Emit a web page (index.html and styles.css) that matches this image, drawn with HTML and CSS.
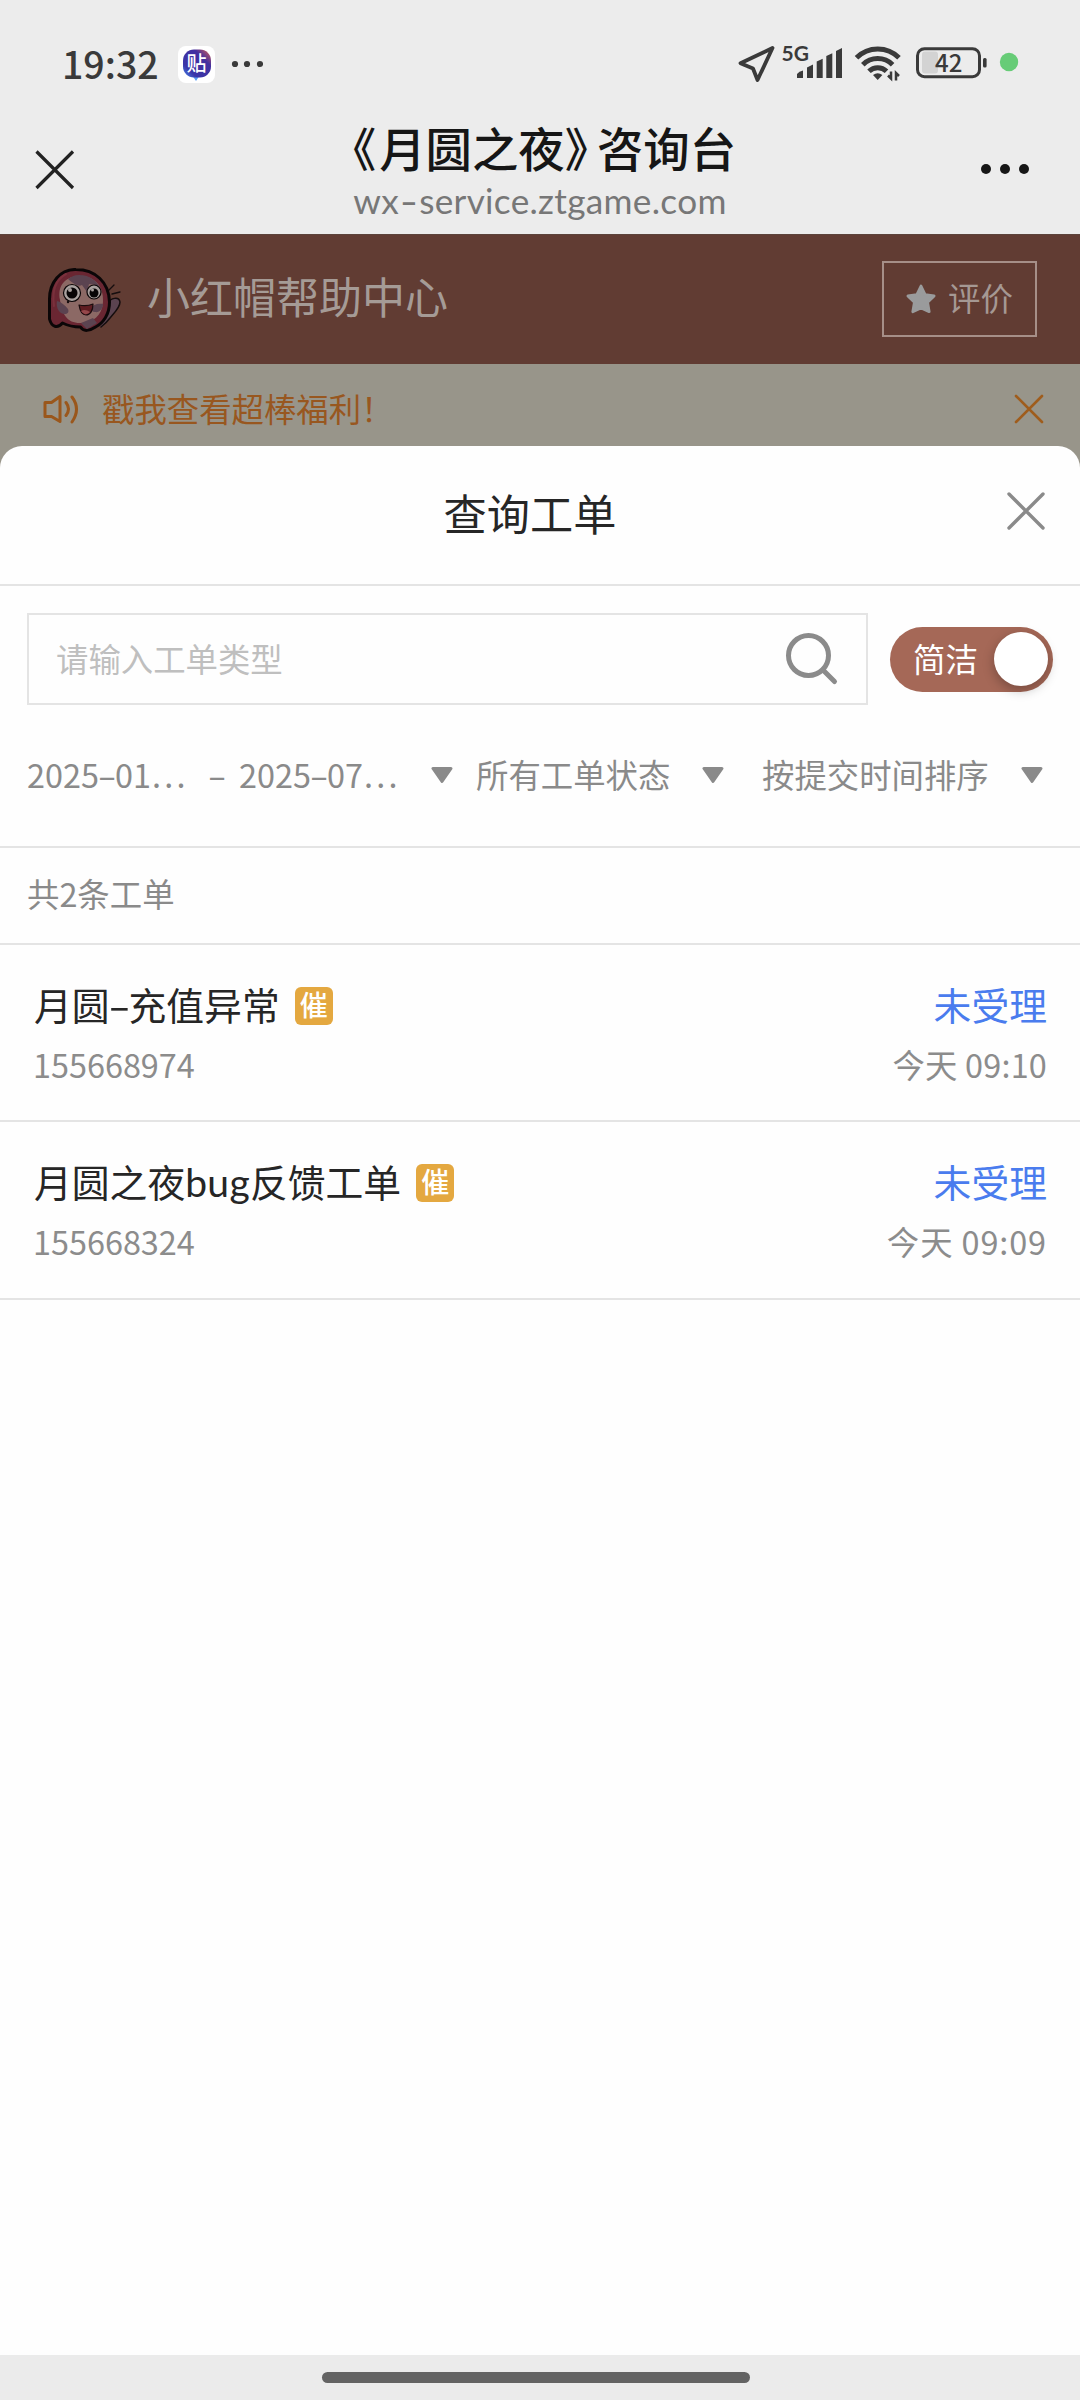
FILE: index.html
```html
<!DOCTYPE html>
<html lang="zh-CN">
<head>
<meta charset="utf-8">
<title>《月圆之夜》咨询台</title>
<link rel="stylesheet" href="styles.css">
</head>
<body>
<div class="status">
  <span class="clock">19:32</span>
  <span class="app"><svg width="37" height="37" viewBox="0 0 37 37"><defs><linearGradient id="g" x1="0" y1="1" x2="1" y2="0"><stop offset="0" stop-color="#4a8df0"/><stop offset=".25" stop-color="#3a35a8"/><stop offset=".7" stop-color="#4330a0"/><stop offset="1" stop-color="#e0604e"/></linearGradient></defs><rect width="37" height="37" rx="8" fill="#fff"/><path d="M14 29h8l-4 6z" fill="#5a9df2"/><rect x="5" y="3.500" width="28" height="28" rx="11" fill="url(#g)"/><text x="18.500" y="25" text-anchor="middle" class="app-char">贴</text></svg></span>
  <svg class="more-small" width="32" height="8" viewBox="0 0 32 8" fill="#3a3a3a"><circle cx="4" cy="4" r="3.100"/><circle cx="16" cy="4" r="3.100"/><circle cx="29" cy="4" r="3.100"/></svg>
  <svg class="signals" width="290" height="46" viewBox="734 42 290 46">
    <path d="M772.500 49 740.500 64.300 753 69.500 757.500 81z" fill="none" stroke="#3a3a3a" stroke-width="3.800" stroke-linejoin="round"/>
    <text x="781.500" y="61.500" class="net">5G</text>
    <g fill="#3a3a3a"><path d="M797 79v-4q2-3 6-3.500v7.500z"/><path d="M807 79V68.500l6-3V79z"/><path d="M816.700 79V62.500l6-2.800V79z"/><path d="M826.300 79V57l6-2.800V79z"/><path d="M836 79V52l6-3V79z"/></g>
    <g fill="none" stroke="#3a3a3a" stroke-width="5"><path d="M856.500 58.800a30 30 0 0 1 42.500 0"/><path d="M862.800 65.800a21 21 0 0 1 29.800 0"/><path d="M869 72.300a12.500 12.500 0 0 1 17.500 0"/></g>
    <path d="M873 76q4.700-3.600 9.400 0l-4.700 5z" fill="#3a3a3a"/>
    <path d="M888 76.500l3 3V72.500M899 77l-3-3V81.500" fill="none" stroke="#3a3a3a" stroke-width="2.500"/>
    <rect x="922" y="52.500" width="16" height="22" rx="3" fill="#d3d3d3"/>
    <rect x="917.500" y="49.700" width="62" height="28" rx="7" fill="none" stroke="#3a3a3a" stroke-width="3"/>
    <rect x="983" y="59" width="3.600" height="9.500" rx="1.500" fill="#3a3a3a"/>
    <text x="948.700" y="73" text-anchor="middle" class="batt">42</text>
    <circle cx="1009" cy="63" r="9.200" fill="#67cc77"/>
  </svg>
</div>
<header class="nav">
  <svg class="nav-close" width="40" height="40" viewBox="0 0 40 40" stroke="#222" stroke-width="3.200"><path d="M1.500 1.500 38 38M38 1.500 1.500 38"/></svg>
  <div class="nav-text">
    <h1><span class="open">《</span>月圆之夜<span class="shut">》</span>咨询台</h1>
    <p class="latin">wx<b>-</b>service.ztgame.com</p>
  </div>
  <svg class="nav-more" width="50" height="12" viewBox="0 0 50 12" fill="#161616"><circle cx="6" cy="6" r="5"/><circle cx="25" cy="6" r="5"/><circle cx="44" cy="6" r="5"/></svg>
</header>
<div class="brand">
  <svg class="avatar" width="74" height="64" viewBox="0 0 74 64" stroke-linejoin="round" stroke-linecap="round">
    <path d="M52 56c6-8 8-14 9-21 1-5 10-7 11-1 0 6-7 12-10 16-3 4-5 6-9 9" fill="#5b4350" stroke="#150d0e" stroke-width="1.500"/>
    <path d="M61 22l5-5M64 26l8-2" stroke="#150d0e" stroke-width="1.300"/>
    <path d="M28 1.500C12 1 1.500 15 1.500 31v20c2 8 8 10 13 4 6 3 12 4 18 4 3 5 9 4 15 0 8-4 14-13 14-25C61 14 47 1.500 28 1.500z" fill="#6a2632" stroke="#0b0607" stroke-width="3"/>
    <path d="M12 32C9 17 18 9 30 8c16-1 26 10 25 26-1 14-10 21-23 21S14 46 12 32z" fill="#8c6965"/>
    <path d="M20 11c6 5 10 8 14 6l5 7 2-8c7 0 10 3 13 8C50 13 42 7 31 7c-5 0-8 2-11 4z" fill="#5b4350"/>
    <path d="M9 33c4 1 8 4 11 8 2 5-3 6-7 4-3-2-5-7-4-12zM43 40c2-3 6-5 12-4 0 5-4 9-8 8-3 0-4-2-4-4zM33 55l12-5 4 5-10 6z" fill="#5b4350"/>
    <circle cx="24" cy="25" r="8.500" fill="#a9a19f" stroke="#0b0607" stroke-width="1.200"/><circle cx="46" cy="24" r="7" fill="#a9a19f" stroke="#0b0607" stroke-width="1.200"/>
    <circle cx="24" cy="25" r="5.500" fill="#080506"/><circle cx="46" cy="25" r="4.500" fill="#080506"/><circle cx="22" cy="22" r="2" fill="#a9a19f"/><circle cx="44.500" cy="22" r="1.500" fill="#a9a19f"/>
    <path d="M31 37c5 1 9 1 14-1 0 7-3 11-7 11s-6-4-7-10z" fill="#5f1d22" stroke="#1b0c0e" stroke-width="1.200"/><path d="M33 43c3-2 6-1 9 1-3 3-6 3-9-1z" fill="#95474a"/>
    <path d="M18 6C7 12 4 24 6 38" fill="none" stroke="#7a303c" stroke-width="2"/>
    <circle cx="20" cy="34" r="1.200" fill="#150d0e"/>
  </svg>
  <span class="brand-name">小红帽帮助中心</span>
  <button class="rate"><svg width="32" height="32" viewBox="0 0 32 32"><path d="M16 3l4.100 8.600 9 1.300-6.500 6.400 1.600 9.400L16 25l-8.200 3.700 1.600-9.400L2.900 12.900l9-1.300z" fill="#9a9b9c" stroke="#9a9b9c" stroke-width="2.800" stroke-linejoin="round"/></svg><span>评价</span></button>
</div>
<div class="notice">
  <svg width="36" height="30" viewBox="0 0 36 30" fill="none" stroke="#9a571c" stroke-width="3" stroke-linejoin="round" stroke-linecap="round"><path d="M2 8.500h6.500L17 2.500v25L8.500 22.500H2z"/><path d="M23 8.500q5 6.500 0 13M29 3q9 12 0 25"/></svg>
  <span>戳我查看超棒福利！</span>
  <svg class="notice-x" width="30" height="30" viewBox="0 0 30 30" stroke="#9f5d1d" stroke-width="2.600" stroke-linecap="round"><path d="M2 2 28 28M28 2 2 28"/></svg>
</div>
<main class="sheet">
  <div class="sheet-head">
    <h2>查询工单</h2>
    <svg width="38" height="38" viewBox="0 0 38 38" stroke="#8a8a8a" stroke-width="3.400" stroke-linecap="round"><path d="M2 2 36 36M36 2 2 36"/></svg>
  </div>
  <section class="query">
    <div class="search-line">
      <div class="search"><span>请输入工单类型</span>
        <svg width="54" height="54" viewBox="0 0 54 54" fill="none" stroke="#8b8b8b" stroke-width="5" stroke-linecap="round"><circle cx="23.500" cy="23.500" r="20"/><path d="M38 38 49.500 49.500"/></svg>
      </div>
      <div class="toggle"><span>简洁</span><i></i></div>
    </div>
    <div class="filters">
      <span class="date">2025<b>-</b>01<u>...</u></span><span class="to"><b>-</b></span><span class="date date2">2025<b>-</b>07<u>...</u></span>
      <svg width="22" height="17" viewBox="0 0 22 17"><path d="M2 1.500h18L11 14.500z"/></svg>
      <span class="state">所有工单状态</span>
      <svg width="22" height="17" viewBox="0 0 22 17"><path d="M2 1.500h18L11 14.500z"/></svg>
      <span class="sort">按提交时间排序</span>
      <svg width="22" height="17" viewBox="0 0 22 17"><path d="M2 1.500h18L11 14.500z"/></svg>
    </div>
  </section>
  <div class="count">共2条工单</div>
  <article class="ticket">
    <div class="line"><span class="name">月圆<b>-</b>充值异常</span><span class="urge">催</span><span class="pending">未受理</span></div>
    <div class="line meta"><span>155668974</span><time>今天 09:10</time></div>
  </article>
  <article class="ticket">
    <div class="line"><span class="name">月圆之夜<em>bug</em>反馈工单</span><span class="urge">催</span><span class="pending">未受理</span></div>
    <div class="line meta"><span>155668324</span><time class="wide">今天 09:09</time></div>
  </article>
</main>
<footer class="home"><i></i></footer>
</body>
</html>
```
FILE: styles.css
```css
* { box-sizing: border-box; margin: 0; padding: 0; }
body { width: 1080px; height: 2400px; display: flex; flex-direction: column; background: #ececec; font-family: "Noto Sans CJK SC", sans-serif; font-size: 32.4px; color: #262626; white-space: nowrap; overflow: hidden; }
svg { display: block; flex: none; }
b, em, i, u { font-weight: inherit; font-style: normal; text-decoration: none; }
/* wide hyphens, as in the phone's system typeface */
b { display: inline-block; width: .5em; text-align: center; transform: scaleX(1.7); }

.status { height: 104px; padding: 24px 56px 0 62px; display: flex; align-items: center; }
.clock { width: 116px; margin-top: -3px; font-size: 37.5px; font-weight: 500; line-height: 56px; color: #3a3a3a; }
.app-char { font-size: 20px; font-weight: 500; fill: #fff; }
.more-small { margin-left: 16px; }
.signals { margin-left: auto; }
.net { font: 700 21px Lato, sans-serif; fill: #3a3a3a; }
.batt { font-size: 24px; font-weight: 500; fill: #3a3a3a; }

.nav { height: 130px; padding: 0 49px 0 35px; display: grid; grid-template-columns: 40px 1fr 50px; }
.nav-close { margin-top: 46px; }
.nav-more { margin-top: 59px; margin-left: -1px; }
.nav-text { display: flex; flex-direction: column; align-items: center; }
h1 { height: 73px; margin-left: 33px; font-size: 46.400px; line-height: 86px; font-weight: 500; color: #161616; }
.open, .shut { font-feature-settings: "halt"; }
.open { margin-right: 3px; }
.shut { margin-right: 9px; }
.latin { margin-left: 24px; font: 35.200px/46px Lato, sans-serif; letter-spacing: .3px; color: #777; }
.latin b { width: 20px; transform: scaleX(1.4); }

.brand { height: 130px; padding: 0 43px 0 48px; display: flex; align-items: center; background: #613c33; border-top: 1px solid #5c433b; }
.brand-name { margin-left: 25px; font-size: 43px; line-height: 60px; margin-top: -9px; color: #a59b96; }
.rate { margin-left: auto; margin-top: -1px; width: 155px; height: 76px; padding: 0 0 0 21px; display: flex; align-items: center; background: none; border: 2px solid #a68f88; font: 32.400px/50px "Noto Sans CJK SC", sans-serif; color: #a59893; }
.rate span { margin: -4px 0 0 11px; }

.notice { height: 106px; padding: 8px 36px 24px 43px; display: flex; align-items: center; background: #98958a; color: #98571f; }
.notice span { margin: -4px 0 0 23px; }
.notice-x { margin-left: auto; }

.sheet { flex: 1; margin-top: -24px; border-radius: 22px 22px 0 0; background: #fefefe; }
.sheet-head { height: 140px; padding: 0 35px 0 15px; display: grid; grid-template-columns: 38px 1fr 38px; border-bottom: 2px solid #e4e4e4; }
h2 { grid-column: 2; text-align: center; font-size: 43.200px; line-height: 133px; font-weight: 400; }
.sheet-head svg { margin-top: 46px; }

.query { height: 262px; padding: 27px 27px 0; border-bottom: 2px solid #e4e4e4; }
.search-line { display: flex; align-items: center; gap: 22px; }
.search { width: 841px; height: 92px; padding: 0 27px 0 27px; display: flex; align-items: center; justify-content: space-between; border: 2px solid #e4e4e4; color: #bfbfbf; }
.search span, .toggle span { margin-top: -4px; }
.toggle { width: 163px; height: 65px; padding: 0 5px 0 23px; display: flex; align-items: center; justify-content: space-between; border-radius: 33px; background: #a56857; color: #fff; }
.toggle i { width: 54px; height: 54px; border-radius: 50%; background: #fff; box-shadow: 0 4px 12px rgba(0, 0, 0, .28); }
.filters { height: 138px; display: flex; align-items: center; color: #8a8a8a; line-height: 48px; }
.filters svg { margin: 2px 0 0 -1px; fill: #8a8a8a; stroke: #8a8a8a; stroke-width: 3px; stroke-linejoin: round; }
.date { width: 182px; }
.date u { letter-spacing: 3.200px; margin-left: 1px; }
.to { width: 30px; }
.date2 { width: 193px; }
.state { margin-left: 23px; width: 227px; }
.sort { margin-left: 38px; width: 260px; }

.count { height: 97px; padding-left: 27px; line-height: 90px; border-bottom: 2px solid #e4e4e4; color: #8a8a8a; }
.ticket { height: 177px; padding: 31px 33px 0 34px; border-bottom: 2px solid #e4e4e4; }
.ticket + .ticket { height: 178px; }
.line { height: 60px; display: flex; align-items: center; }
.name, .pending { font-size: 37.800px; line-height: 56px; margin-top: -4px; }
.name em { font-family: Lato, sans-serif; font-size: 39px; line-height: 1; letter-spacing: .3px; }
.urge { width: 38px; height: 38px; margin-left: 15px; border-radius: 6px; background: #e4a840; color: #fff; font-size: 28px; font-weight: 500; line-height: 35px; text-align: center; }
.pending { margin-left: auto; color: #4a7cee; }
.meta { justify-content: space-between; color: #8c8c8c; line-height: 50px; margin-top: -2px; }
.meta span { margin-left: -1px; }
.meta time { letter-spacing: .2px; }
.meta .wide { letter-spacing: .9px; }

.home { height: 45px; display: flex; justify-content: center; padding-top: 17px; padding-right: 8px; background: #ebebeb; }
.home i { width: 428px; height: 11px; border-radius: 6px; background: #636363; }
```
